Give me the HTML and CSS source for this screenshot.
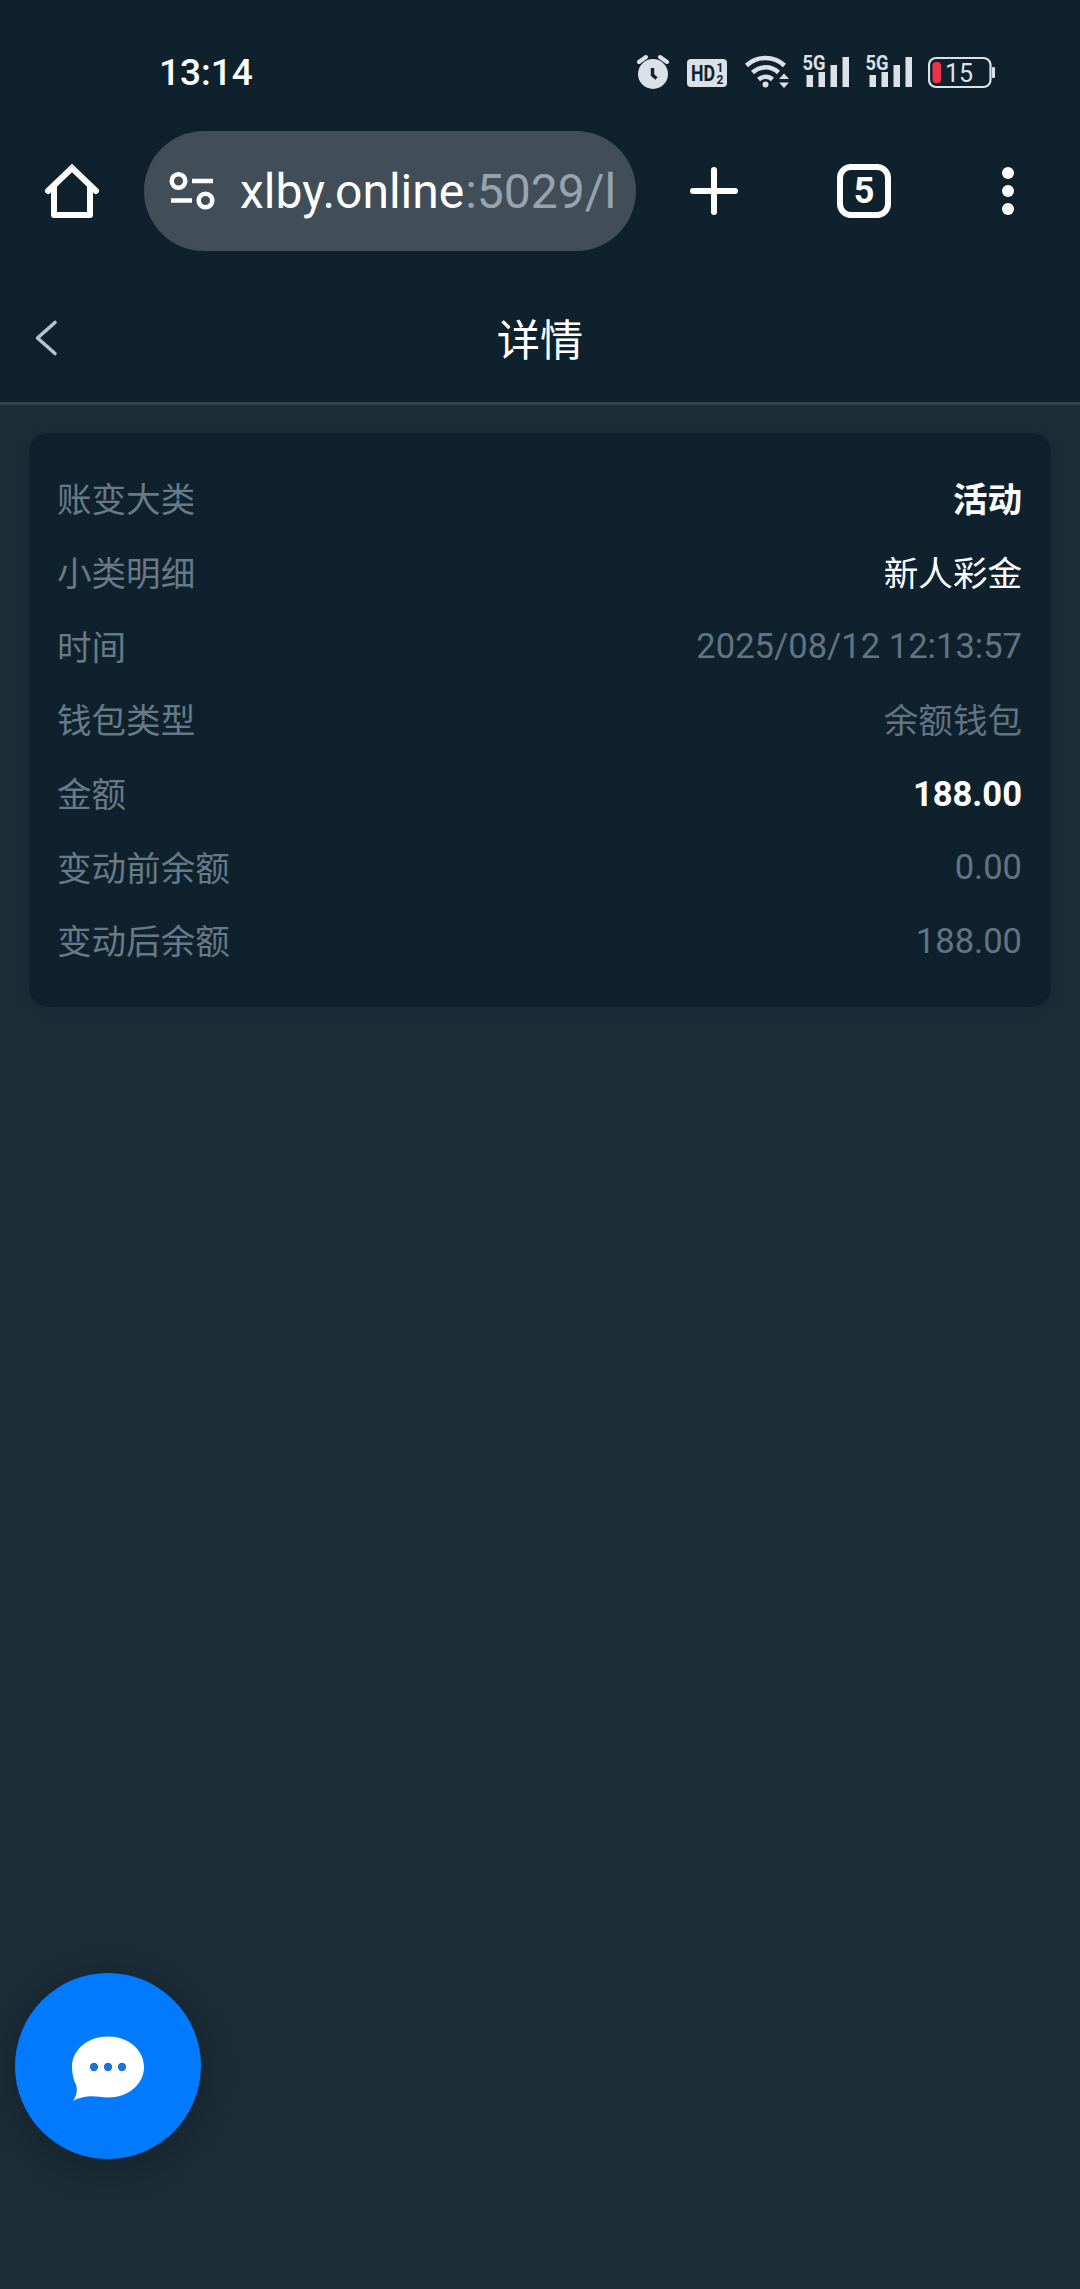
FILE: index.html
```
<!DOCTYPE html>
<html lang="zh-CN">
<head>
  <meta charset="UTF-8" />
  <meta name="viewport" content="width=device-width, initial-scale=1.0"/>
  <title>详情</title>
  <link rel="stylesheet" href="styles.css">
</head>
<body>
  <div class="status-bar">
    <span class="clock">13:14</span>
    <div class="status-icons">
      <svg class="alarm" width="32" height="44" viewBox="637 51 32 44">
        <circle cx="653" cy="74" r="15" fill="#dbe1e6"/>
        <path d="M639 62l7-5M660 57l7 5" stroke="#dbe1e6" stroke-width="4" fill="none" stroke-linecap="round"/>
        <path d="M652.500 68v7l4 3.500" stroke="#10212e" stroke-width="3.500" fill="none"/>
      </svg>
      <svg class="hd" width="40" height="44" viewBox="687 51 40 44">
        <rect x="687" y="59" width="40" height="28" rx="4" fill="#dbe1e6"/>
        <text x="691" y="81" font-size="22.500" textLength="24" lengthAdjust="spacingAndGlyphs">HD</text>
        <text x="716.500" y="71.500" font-size="12">1</text>
        <text x="716.500" y="84" font-size="12">2</text>
      </svg>
      <svg class="wifi" width="46" height="44" viewBox="744 51 46 44" fill="none" stroke="#dbe1e6" stroke-width="4.500">
        <path d="M746.500 65.500a28 28 0 0 1 38 0"/>
        <path d="M752.500 72.500a19 19 0 0 1 26 0"/>
        <path d="M758.500 79.500a10.500 10.500 0 0 1 14 0"/>
        <circle cx="765.500" cy="84.500" r="3" fill="#dbe1e6" stroke="none"/>
        <path d="M779 79l5-5.500 5 5.500zM779 82.500l5 5.500 5-5.500z" fill="#dbe1e6" stroke="none"/>
      </svg>
      <svg class="signal" width="48" height="44" viewBox="802 51 48 44">
        <path d="M806.500 75h6.500v12h-6.500zM818.500 72h6.500v15h-6.500zM830.500 65h6.500v22h-6.500zM842.500 57h6.500v30h-6.500z"/>
        <text x="802.500" y="70" font-size="20" textLength="23" lengthAdjust="spacingAndGlyphs">5G</text>
      </svg>
      <svg class="signal" width="48" height="44" viewBox="802 51 48 44">
        <path d="M806.500 75h6.500v12h-6.500zM818.500 72h6.500v15h-6.500zM830.500 65h6.500v22h-6.500zM842.500 57h6.500v30h-6.500z"/>
        <text x="802.500" y="70" font-size="20" textLength="23" lengthAdjust="spacingAndGlyphs">5G</text>
      </svg>
      <svg class="battery" width="68" height="44" viewBox="928 51 68 44">
        <rect x="929" y="58" width="61.500" height="29" rx="7" fill="none" stroke="#dbe1e6" stroke-width="2.200"/>
        <rect x="992" y="67" width="3" height="11" rx="1" fill="#dbe1e6"/>
        <rect x="932.500" y="62" width="8.500" height="21" rx="3.500" fill="#ed3345"/>
        <text x="945" y="81.500" font-size="25">15</text>
      </svg>
    </div>
  </div>

  <div class="browser-bar">
    <svg class="home" width="60" height="60" viewBox="42 161 60 60" fill="none" stroke="#fff" stroke-width="6" stroke-linecap="round" stroke-linejoin="round">
      <path stroke-linejoin="miter" d="M48 191l24-23 24 23"/>
      <path d="M54 187v28h36v-28"/>
    </svg>
    <div class="url-box">
      <svg class="tune" width="48" height="42" viewBox="168 170 48 42" fill="none" stroke="#fff" stroke-width="4.500">
        <circle cx="178.500" cy="181" r="6.800"/>
        <circle cx="205.500" cy="200.500" r="6.800"/>
        <path d="M192 181h21M171 200.500h21"/>
      </svg>
      <span class="host">xlby.online</span><span class="port">:5029/l</span>
    </div>
    <svg class="plus" width="48" height="48" viewBox="0 0 48 48" stroke="#fff" stroke-width="6" stroke-linecap="round">
      <path d="M3 24h42M24 3v42"/>
    </svg>
    <div class="tabs">5</div>
    <svg class="dots" width="12" height="48" viewBox="0 0 12 48" fill="#fff">
      <circle cx="6" cy="6" r="6"/>
      <circle cx="6" cy="24" r="6"/>
      <circle cx="6" cy="42" r="6"/>
    </svg>
  </div>

  <header class="nav">
    <svg class="back" width="26" height="42" viewBox="0 0 26 42" fill="none" stroke="#b3c3d3" stroke-width="3.600" stroke-linecap="round" stroke-linejoin="round">
      <path d="M21 4.500L3.500 20l17.500 15.500"/>
    </svg>
    <h1>详情</h1>
  </header>

  <main class="card">
    <div class="row"><span class="label">账变大类</span><span class="value cn medium">活动</span></div>
    <div class="row"><span class="label">小类明细</span><span class="value cn white">新人彩金</span></div>
    <div class="row"><span class="label">时间</span><span class="value">2025/08/12 12:13:57</span></div>
    <div class="row"><span class="label">钱包类型</span><span class="value cn">余额钱包</span></div>
    <div class="row"><span class="label">金额</span><span class="value bold">188.00</span></div>
    <div class="row"><span class="label">变动前余额</span><span class="value">0.00</span></div>
    <div class="row"><span class="label">变动后余额</span><span class="value">188.00</span></div>
  </main>

  <button class="chat-btn" aria-label="客服">
    <svg width="74" height="68" viewBox="71 2035 74 68">
      <path d="M108 2036.500c20 0 36 13 36 30.500s-16 30.500-36 30.500c-7 0-12-1.500-18-1.200-6 .3-12 2-17 4.700 3.500-5 4.500-10 3.500-15-3-6-4.500-12-4.500-19 0-17.500 16-30.500 36-30.500z" fill="#fff"/>
      <g fill="#1976d2">
        <circle cx="94" cy="2067" r="4.200"/>
        <circle cx="108" cy="2067" r="4.200"/>
        <circle cx="122" cy="2067" r="4.200"/>
      </g>
    </svg>
  </button>
</body>
</html>
```
FILE: styles.css
```
html, body {
  margin: 0;
  padding: 0;
  height: 100%;
}

body {
  font-family: Roboto, "Noto Sans CJK SC", sans-serif;
  background-color: #1b2c37;
  color: #fff;
  overflow: hidden;
}

svg {
  display: block;
  flex-shrink: 0;
}

/* phone status bar */
.status-bar {
  box-sizing: border-box;
  height: 131px;
  padding: 14px 84px 0 159px;
  display: flex;
  align-items: center;
  justify-content: space-between;
  background-color: #10212e;
}

.clock {
  font-size: 37px;
  font-weight: 500;
}

.status-icons {
  display: flex;
  align-items: center;
}

.hd {
  margin-left: 18px;
  fill: #10212e;
  font-weight: 700;
}

.wifi {
  margin-left: 17px;
}

.signal {
  margin-left: 12px;
  fill: #dbe1e6;
  font-weight: 700;
}

.signal + .signal {
  margin-left: 15px;
}

.battery {
  margin-left: 15px;
  fill: #dbe1e6;
}

/* browser toolbar */
.browser-bar {
  box-sizing: border-box;
  height: 144px;
  padding: 0 66px 24px 42px;
  display: flex;
  align-items: center;
  background-color: #10212e;
}

.url-box {
  box-sizing: border-box;
  width: 492px;
  height: 120px;
  margin-left: 42px;
  padding: 0 22px 0 24px;
  border-radius: 60px;
  display: flex;
  align-items: center;
  background-color: #414e58;
  font-size: 48px;
  white-space: nowrap;
}

.host {
  margin-left: 24px;
}

.port {
  margin-left: 1px;
  color: #98a3ad;
}

.plus {
  margin-left: 54px;
}

.tabs {
  box-sizing: border-box;
  width: 54px;
  height: 54px;
  margin-left: 99px;
  border: 6px solid #fff;
  border-radius: 14px;
  font-size: 36px;
  font-weight: 700;
  line-height: 43px;
  text-align: center;
}

.dots {
  margin-left: auto;
}

/* page header */
.nav {
  box-sizing: border-box;
  height: 130px;
  padding: 0 34px;
  display: grid;
  grid-template-columns: 26px 1fr 26px;
  align-items: center;
  background-color: #10212e;
  border-bottom: 3px solid #33434e;
}

.nav h1 {
  margin: 0;
  padding-bottom: 3px;
  font-size: 43.2px;
  font-weight: 400;
  text-align: center;
}

.card {
  box-sizing: border-box;
  height: 574px;
  margin: 28px 29px 0;
  padding: 29px 29px 29px 28px;
  border-radius: 20px;
  background-color: #10212e;
  box-shadow: 0 3px 12px rgba(16, 33, 46, 0.2);
}

.row {
  display: flex;
  align-items: center;
  justify-content: space-between;
  height: 73.7px;
  font-size: 34.56px;
}

.label {
  padding-bottom: 3px;
  color: #677a88;
}

.value {
  color: #627482;
}

.cn {
  padding-bottom: 3px;
}

.white {
  color: #fff;
}

.medium {
  color: #fff;
  font-weight: 600;
}

.bold {
  color: #fff;
  font-weight: 700;
}

/* floating support button */
.chat-btn {
  position: fixed;
  left: 15px;
  top: 1973px;
  width: 186px;
  height: 186px;
  padding: 6px 0 0;
  border: none;
  border-radius: 50%;
  display: flex;
  align-items: center;
  justify-content: center;
  background-color: #007aff;
  box-shadow: 0 8px 36px rgba(0, 0, 0, 0.2);
}
```
